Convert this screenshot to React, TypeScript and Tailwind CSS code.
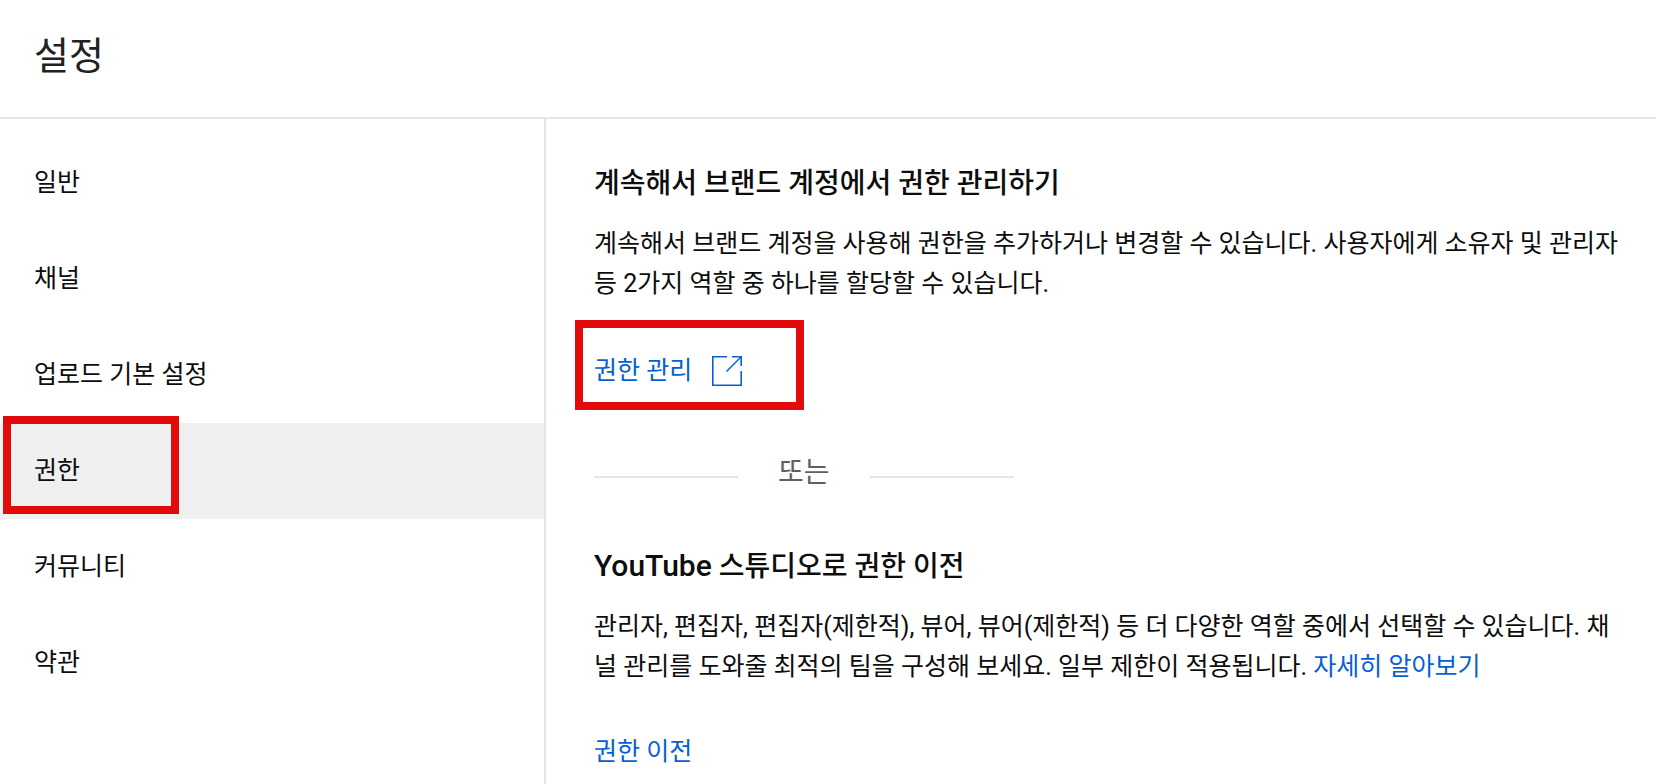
// App.tsx
interface NavItem {
  label: string;
  selected?: boolean;
}

const navItems: NavItem[] = [
  { label: "일반" },
  { label: "채널" },
  { label: "업로드 기본 설정" },
  { label: "권한", selected: true },
  { label: "커뮤니티" },
  { label: "약관" },
];

function OpenInNewIcon() {
  return (
    <svg
      viewBox="0 0 30 30"
      className="size-[30px] shrink-0"
      fill="none"
      stroke="currentColor"
      aria-hidden="true"
    >
      <path strokeWidth="1.6" d="M15 .8H.8V29.2H29.2V15" />
      <path strokeWidth="1.6" d="M20 .8H29.2V10" />
      <path strokeWidth="1.4" d="M29 1L14.5 15.5" />
    </svg>
  );
}

function Sidebar() {
  return (
    <nav className="w-[546px] shrink-0 border-r-2 border-[#e5e5e5] pt-4">
      <ul>
        {navItems.map((item) => (
          <li key={item.label} className="relative">
            <button
              type="button"
              className={`flex h-24 w-full items-center px-[34px] text-left text-[25px] ${
                item.selected ? "bg-[#f0f0f0]" : ""
              }`}
            >
              {item.label}
            </button>
            {item.selected && (
              <span className="pointer-events-none absolute -top-[7px] left-[3px] h-[98px] w-44 border-8 border-[#e20a0a]" />
            )}
          </li>
        ))}
      </ul>
    </nav>
  );
}

export default function App() {
  return (
    <div className="flex min-h-screen flex-col bg-white font-[Roboto,'Noto_Sans_CJK_KR',sans-serif] text-[#0d0d0d]">
      <header className="border-b-2 border-[#e5e5e5] px-[34px] pt-[30px] pb-[35px]">
        <h1 className="text-[38px] leading-[52px] text-[#212121]">설정</h1>
      </header>

      <div className="flex flex-1">
        <Sidebar />

        <main className="min-w-0 flex-1 pt-[45px] pr-8 pl-12">
          <section>
            <h2 className="text-[28px] leading-10 font-medium">
              계속해서 브랜드 계정에서 권한 관리하기
            </h2>
            <p className="mt-5 text-[25px] leading-10">
              계속해서 브랜드 계정을 사용해 권한을 추가하거나 변경할 수
              있습니다. 사용자에게 소유자 및 관리자 등 2가지 역할 중 하나를
              할당할 수 있습니다.
            </p>
            <div className="relative mt-[47px] w-fit">
              <a
                href="#manage"
                className="flex items-center gap-5 text-[25px] leading-10 text-[#065fd4]"
              >
                권한 관리
                <OpenInNewIcon />
              </a>
              <span className="pointer-events-none absolute -top-[31px] -left-[19px] h-[90px] w-[229px] border-8 border-[#e20a0a]" />
            </div>
          </section>

          <div className="mt-[62px] flex items-center gap-10 text-[28px] leading-10 text-[#606060]">
            <span className="mt-2 w-36 border-t-2 border-[#e5e5e5]" />
            또는
            <span className="mt-2 w-36 border-t-2 border-[#e5e5e5]" />
          </div>

          <section className="mt-[53px]">
            <h2 className="text-[28px] leading-10 font-medium">
              <span className="text-[30px]">YouTube</span> 스튜디오로 권한 이전
            </h2>
            <p className="mt-5 text-[25px] leading-10">
              관리자, 편집자, 편집자(제한적), 뷰어, 뷰어(제한적) 등 더 다양한
              역할 중에서 선택할 수 있습니다. 채널 관리를 도와줄 최적의 팀을
              구성해 보세요. 일부 제한이 적용됩니다.{" "}
              <a href="#learn-more" className="text-[#065fd4]">
                자세히 알아보기
              </a>
            </p>
            <button
              type="button"
              className="mt-[45px] text-[25px] leading-10 text-[#065fd4]"
            >
              권한 이전
            </button>
          </section>
        </main>
      </div>
    </div>
  );
}
